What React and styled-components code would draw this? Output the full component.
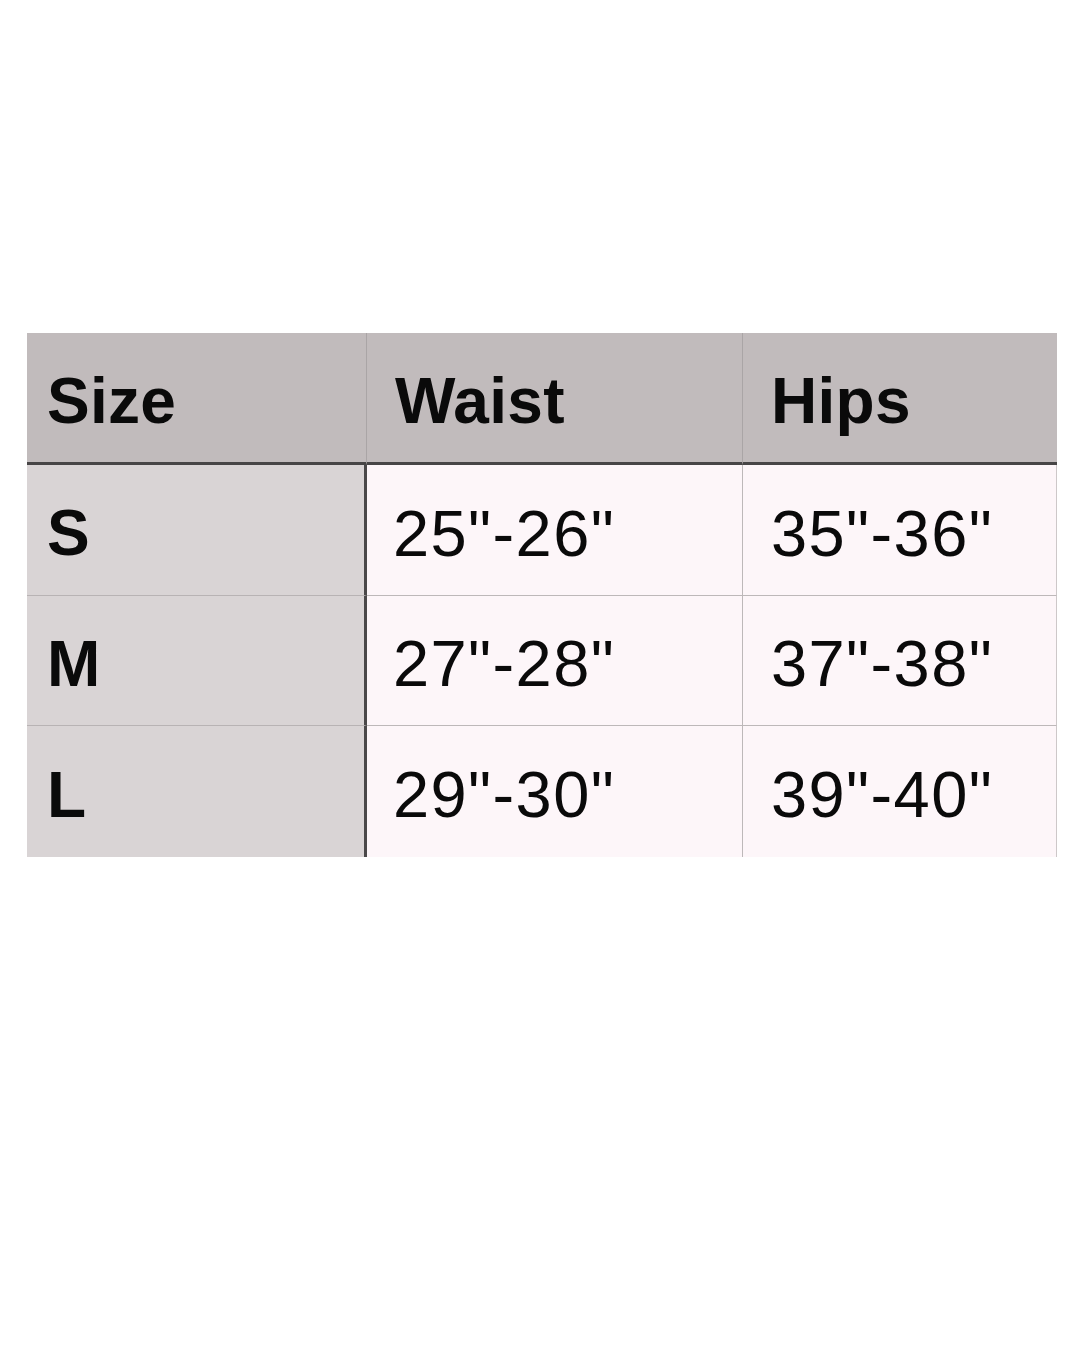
import React from "react";
import styled, { createGlobalStyle } from "styled-components";

const GlobalStyle = createGlobalStyle`
  html, body {
    margin: 0;
    padding: 0;
    background: #ffffff;
  }
  * {
    box-sizing: border-box;
  }
`;

const Page = styled.div`
  width: 1080px;
  height: 1350px;
  padding: 333px 0 0 27px;
  background: #ffffff;
  font-family: "Liberation Sans", Arial, sans-serif;
  color: #0a0a0a;
`;

const Table = styled.div`
  display: grid;
  grid-template-columns: 340px 376px 314px;
  grid-template-rows: 132px 131px 130px 131px;
  width: 1030px;
`;

const HeadCell = styled.div`
  display: flex;
  align-items: center;
  padding-left: ${(p) => (p.$first ? "20px" : "28px")};
  padding-top: 6px;
  background: #c1bbbc;
  border-bottom: 3px solid #474546;
  border-right: ${(p) => (p.$last ? "none" : "1px solid #aaa5a6")};
  font-size: 64px;
  font-weight: 700;
  letter-spacing: 0.3px;
`;

const SizeCell = styled.div`
  display: flex;
  align-items: center;
  padding-left: 20px;
  padding-top: 6px;
  background: #d9d4d5;
  border-right: 3px solid #4a4849;
  border-bottom: ${(p) => (p.$lastRow ? "none" : "1px solid #b8b3b4")};
  font-size: 64px;
  font-weight: 700;
`;

const ValueCell = styled.div`
  display: flex;
  align-items: center;
  padding-left: ${(p) => (p.$last ? "28px" : "26px")};
  padding-top: 6px;
  background: #fdf6f9;
  border-right: 1px solid ${(p) => (p.$last ? "#cdc8c9" : "#bdb8b9")};
  border-bottom: ${(p) => (p.$lastRow ? "none" : "1px solid #bdb8b9")};
  font-size: 65px;
  letter-spacing: 1.4px;
`;

const rows = [
  { size: "S", waist: '25"-26"', hips: '35"-36"' },
  { size: "M", waist: '27"-28"', hips: '37"-38"' },
  { size: "L", waist: '29"-30"', hips: '39"-40"' },
];

export default function App() {
  return (
    <Page>
      <GlobalStyle />
      <Table>
        <HeadCell $first>Size</HeadCell>
        <HeadCell>Waist</HeadCell>
        <HeadCell $last>Hips</HeadCell>
        {rows.map((r, i) => {
          const lastRow = i === rows.length - 1;
          return (
            <React.Fragment key={r.size}>
              <SizeCell $lastRow={lastRow}>{r.size}</SizeCell>
              <ValueCell $lastRow={lastRow}>{r.waist}</ValueCell>
              <ValueCell $lastRow={lastRow} $last>
                {r.hips}
              </ValueCell>
            </React.Fragment>
          );
        })}
      </Table>
    </Page>
  );
}
